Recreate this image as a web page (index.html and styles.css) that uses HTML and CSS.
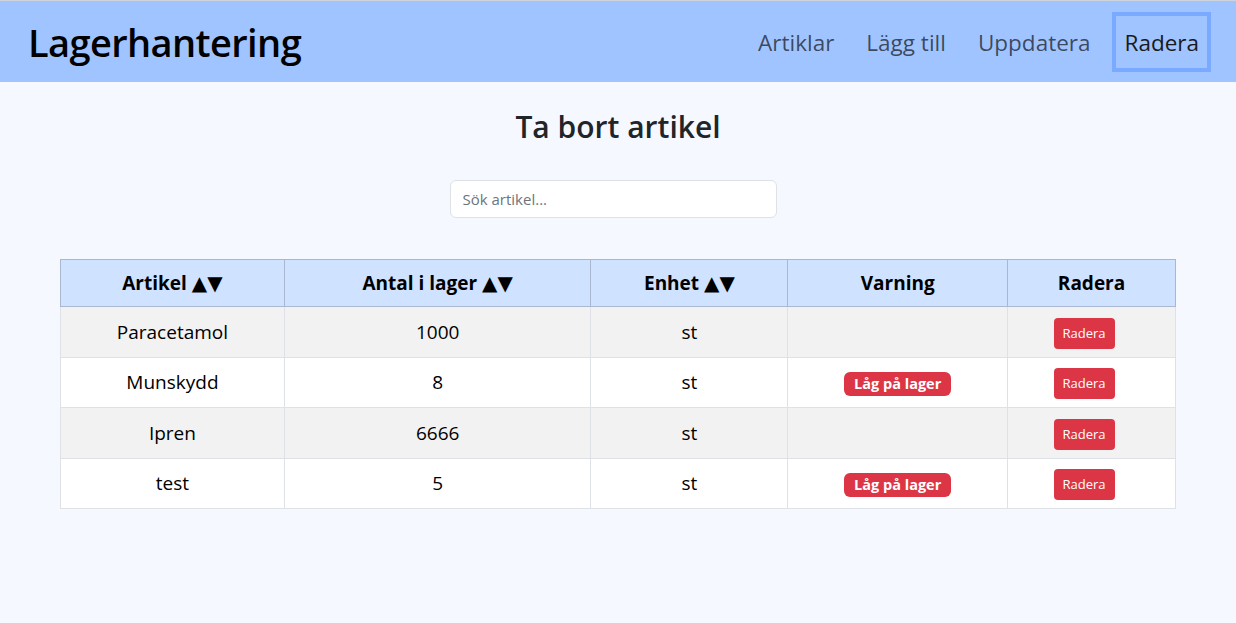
FILE: index.html
```html
<!DOCTYPE html>
<html lang="sv">
<head>
<meta charset="utf-8">
<title>Lagerhantering</title>
<link rel="stylesheet" href="styles.css">
</head>
<body>
<header class="navbar">
  <div class="brand">Lagerhantering</div>
  <nav class="nav">
    <a class="nav-link" href="#">Artiklar</a>
    <a class="nav-link" href="#">Lägg till</a>
    <a class="nav-link" href="#">Uppdatera</a>
    <a class="nav-link active" href="#">Radera</a>
  </nav>
</header>
<main class="container">
  <h2 class="title">Ta bort artikel</h2>
  <div class="search-wrap">
    <input class="search" type="text" placeholder="Sök artikel...">
  </div>
  <table class="table">
    <thead>
      <tr>
        <th class="c1">Artikel <span class="sort">▲▼</span></th>
        <th class="c2">Antal i lager <span class="sort">▲▼</span></th>
        <th class="c3">Enhet <span class="sort">▲▼</span></th>
        <th class="c4">Varning</th>
        <th class="c5">Radera</th>
      </tr>
    </thead>
    <tbody>
      <tr class="odd">
        <td>Paracetamol</td><td>1000</td><td>st</td><td></td>
        <td><button class="btn">Radera</button></td>
      </tr>
      <tr>
        <td>Munskydd</td><td>8</td><td>st</td><td><span class="badge">Låg på lager</span></td>
        <td><button class="btn">Radera</button></td>
      </tr>
      <tr class="odd">
        <td>Ipren</td><td>6666</td><td>st</td><td></td>
        <td><button class="btn">Radera</button></td>
      </tr>
      <tr>
        <td>test</td><td>5</td><td>st</td><td><span class="badge">Låg på lager</span></td>
        <td><button class="btn">Radera</button></td>
      </tr>
    </tbody>
  </table>
</main>
</body>
</html>
```

FILE: styles.css
```css
* { box-sizing: border-box; }
html, body { margin: 0; padding: 0; }
body {
  font-family: "Open Sans", "Noto Sans", sans-serif;
  background: #f5f8ff;
  color: #212529;
}
.navbar {
  border-top: 1px solid #cdd3dc;
  background: #a0c4ff;
  height: 82px;
  display: flex;
  align-items: center;
  justify-content: space-between;
  padding: 0 25px 0 28px;
}
.brand {
  font-size: 38px;
  font-weight: 600;
  color: #000;
  letter-spacing: -0.6px;
}
.nav { display: flex; align-items: center; }
.nav-link {
  font-size: 22.5px;
  color: rgba(0,0,0,0.65);
  text-decoration: none;
  padding: 11px 12px 10px;
  border: 4px solid transparent;
}
.nav-link.active {
  color: #1a1a1a;
  border-color: #7aaaff;
  padding: 11px 8px 10px 9px;
  margin-left: 5px;
}
.container {
  width: 1116px;
  margin: 0 auto;
}
.title {
  text-align: center;
  font-size: 30px;
  font-weight: 600;
  margin: 27px 0 35px;
  line-height: 1.2;
}
.search-wrap { display: flex; justify-content: center; margin-bottom: 41px; }
.search {
  width: 327px;
  height: 38px;
  margin-right: 10px;
  border: 1px solid #dee2e6;
  border-radius: 6px;
  padding: 0 12px;
  font-family: inherit;
  font-size: 15px;
  background: #fff;
}
.search::placeholder { color: #6c757d; }
.table {
  width: 1116px;
  border-collapse: collapse;
  font-size: 19px;
  text-align: center;
}
.table th {
  background: #cfe2ff;
  border: 1px solid #a9b8d0;
  font-weight: 700;
  height: 47px;
  color: #000;
}
.sort {
  font-family: "DejaVu Sans", sans-serif;
  font-size: 20px;
  line-height: 1;
}
.table td {
  border: 1px solid #dee2e6;
  height: 50.5px;
  background: #fff;
  color: #000;
  vertical-align: middle;
}
.table tr.odd td { background: #f2f2f2; }
.c1 { width: 224px; }
.c2 { width: 307px; }
.c3 { width: 197px; }
.c4 { width: 220px; }
.c5 { width: 168px; }
.badge {
  display: inline-block;
  background: #dc3545;
  color: #fff;
  font-weight: 700;
  font-size: 14.5px;
  padding: 3px 10px;
  border-radius: 6px;
  line-height: 18px;
}
.btn {
  background: #dc3545;
  color: #fff;
  border: none;
  border-radius: 4px;
  font-family: inherit;
  font-size: 13px;
  padding: 0 9px;
  height: 31px;
  line-height: 31px;
  margin-right: 15px;
  margin-top: 3px;
}
```
